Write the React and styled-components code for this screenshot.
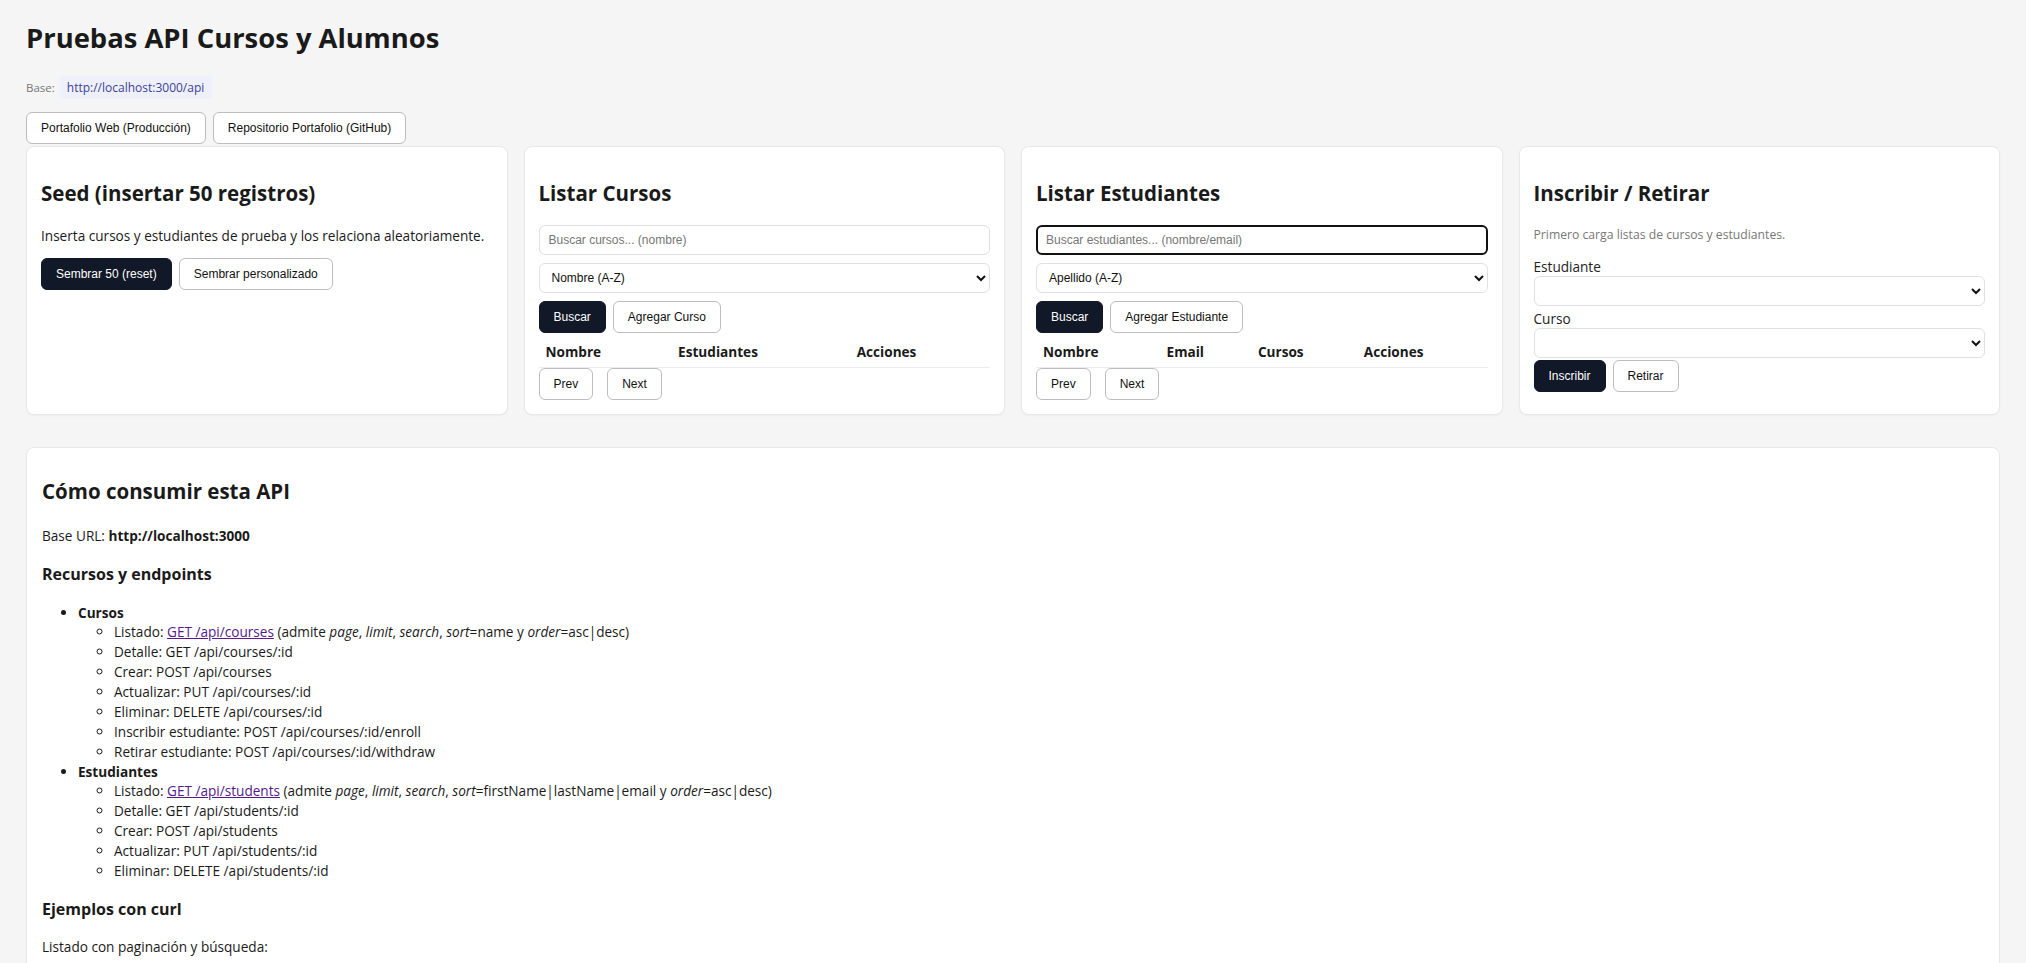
import React from "react";
import styled, { createGlobalStyle } from "styled-components";

const GlobalStyle = createGlobalStyle`
  * {
    box-sizing: border-box;
  }

  body {
    margin: 0;
    background-color: #f5f5f5;
    color: #1a1a1a;
    font-family: "Open Sans", "Noto Sans", sans-serif;
    font-size: 13.6px;
  }
`;

const Page = styled.div`
  padding: 0 26px 40px;
`;

const Title = styled.h1`
  margin: 19px 0;
  font-size: 27.4px;
  line-height: 38px;
  font-weight: 700;
`;

const BaseLine = styled.div`
  display: flex;
  align-items: center;
  gap: 4px;
  height: 23px;
  margin-top: 1px;
`;

const BaseLabel = styled.span`
  font-size: 11.5px;
  color: #777;
`;

const Code = styled.code`
  display: inline-flex;
  align-items: center;
  height: 23px;
  padding: 0 8px;
  border-radius: 4px;
  background-color: #eef0fb;
  color: #3f3f96;
  font-family: "Open Sans", sans-serif;
  font-size: 12px;
`;

const LinkRow = styled.div`
  display: flex;
  gap: 7px;
  margin-top: 13px;
`;

const Button = styled.button`
  height: 32px;
  padding: 0 14px;
  font-family: "Liberation Sans", Arial, sans-serif;
  font-size: 12px;
  color: ${(p) => (p.$primary ? "#ffffff" : "#111111")};
  background-color: ${(p) => (p.$primary ? "#111827" : "#ffffff")};
  border: 1px solid ${(p) => (p.$primary ? "#111827" : "#bdbdbd")};
  border-radius: 6px;
  cursor: pointer;
`;

const Grid = styled.div`
  display: grid;
  grid-template-columns: repeat(4, 1fr);
  gap: 16px;
  margin-top: 2px;
`;

const Card = styled.section`
  background-color: #ffffff;
  border: 1px solid #e8e8e8;
  border-radius: 8px;
  padding: 12px 14px 14px;
  box-shadow: 0 1px 2px rgba(0, 0, 0, 0.03);
`;

const CardTitle = styled.h2`
  margin: 19.5px 0 17px;
  font-size: 20.5px;
  line-height: 29px;
  font-weight: 700;
`;

const Text = styled.p`
  margin: 18.5px 0 12.5px;
  line-height: 19px;
`;

const ButtonRow = styled.div`
  display: flex;
  gap: ${(p) => p.$gap || "7px"};
`;

const Stack = styled.div`
  display: flex;
  flex-direction: column;
  gap: 8px;
`;

const Input = styled.input`
  width: 100%;
  height: 30px;
  padding: 0 ${(p) => (p.$focused ? "8px" : "9px")};
  font-family: "Liberation Sans", Arial, sans-serif;
  font-size: 12px;
  background: #ffffff;
  border: ${(p) => (p.$focused ? "2px solid #111111" : "1px solid #e0e0e0")};
  border-radius: 6px;
  outline: none;

  &::placeholder {
    color: #767676;
  }
`;

const Select = styled.select`
  width: 100%;
  height: 30px;
  padding: 0 8px;
  font-family: "Liberation Sans", Arial, sans-serif;
  font-size: 12px;
  color: #111;
  background: #ffffff;
  border: 1px solid #e0e0e0;
  border-radius: 6px;
  margin: ${(p) => p.$margin || "0"};
`;

const Table = styled.table`
  width: 100%;
  margin-top: 5px;
  border-collapse: collapse;
`;

const Th = styled.th`
  text-align: left;
  padding: 4px 7px 6px;
  font-size: 13.6px;
  line-height: 19px;
  font-weight: 700;
  border-bottom: 1px solid #ececec;
`;

const Hint = styled.p`
  margin: 18.5px 0 13px;
  font-size: 12.2px;
  line-height: 18px;
  color: #777;
`;

const FieldLabel = styled.label`
  display: block;
  line-height: 19px;
  color: #222;
`;

const DocsCard = styled.section`
  margin-top: 32.5px;
  background-color: #ffffff;
  border: 1px solid #e8e8e8;
  border-radius: 8px;
  padding: 12px 15px 20px;
`;

const DocsTitle = styled.h2`
  margin: 17px 0 19.5px;
  font-size: 20.5px;
  line-height: 29px;
  font-weight: 700;
`;

const DocsText = styled.p`
  margin: 0;
  line-height: 19px;
`;

const SubTitle = styled.h3`
  margin: ${(p) => p.$margin || "17px 0"};
  font-size: 16px;
  line-height: 22px;
  font-weight: 700;
`;

const List = styled.ul`
  margin: 0;
  padding-left: 36px;
  list-style: ${(p) => (p.$nested ? "circle" : "disc")};
`;

const Item = styled.li`
  line-height: 20px;
`;

const Lead = styled.strong`
  display: block;
  line-height: 20px;
  margin-bottom: -1px;
`;

const DocLink = styled.a`
  color: #551a8b;
  text-decoration: underline;
`;

function ListCard({ title, placeholder, focused, sort, addLabel, columns }) {
  return (
    <Card>
      <CardTitle>{title}</CardTitle>
      <Stack>
        <Input placeholder={placeholder} $focused={focused} />
        <Select defaultValue="a">
          <option value="a">{sort}</option>
        </Select>
        <ButtonRow>
          <Button $primary>Buscar</Button>
          <Button>{addLabel}</Button>
        </ButtonRow>
      </Stack>
      <Table>
        <thead>
          <tr>
            {columns.map((c) => (
              <Th key={c}>{c}</Th>
            ))}
          </tr>
        </thead>
        <tbody />
      </Table>
      <ButtonRow $gap="14px">
        <Button>Prev</Button>
        <Button>Next</Button>
      </ButtonRow>
    </Card>
  );
}

export default function App() {
  return (
    <>
      <GlobalStyle />
      <Page>
        <Title>Pruebas API Cursos y Alumnos</Title>
        <BaseLine>
          <BaseLabel>Base:</BaseLabel>
          <Code>http://localhost:3000/api</Code>
        </BaseLine>
        <LinkRow>
          <Button>Portafolio Web (Producción)</Button>
          <Button>Repositorio Portafolio (GitHub)</Button>
        </LinkRow>

        <Grid>
          <Card>
            <CardTitle>Seed (insertar 50 registros)</CardTitle>
            <Text>Inserta cursos y estudiantes de prueba y los relaciona aleatoriamente.</Text>
            <ButtonRow>
              <Button $primary>Sembrar 50 (reset)</Button>
              <Button>Sembrar personalizado</Button>
            </ButtonRow>
          </Card>

          <ListCard
            title="Listar Cursos"
            placeholder="Buscar cursos... (nombre)"
            sort="Nombre (A-Z)"
            addLabel="Agregar Curso"
            columns={["Nombre", "Estudiantes", "Acciones"]}
          />

          <ListCard
            title="Listar Estudiantes"
            placeholder="Buscar estudiantes... (nombre/email)"
            focused
            sort="Apellido (A-Z)"
            addLabel="Agregar Estudiante"
            columns={["Nombre", "Email", "Cursos", "Acciones"]}
          />

          <Card>
            <CardTitle>Inscribir / Retirar</CardTitle>
            <Hint>Primero carga listas de cursos y estudiantes.</Hint>
            <FieldLabel>Estudiante</FieldLabel>
            <Select $margin="0 0 3px">
              <option></option>
            </Select>
            <FieldLabel>Curso</FieldLabel>
            <Select $margin="0 0 2px">
              <option></option>
            </Select>
            <ButtonRow>
              <Button $primary>Inscribir</Button>
              <Button>Retirar</Button>
            </ButtonRow>
          </Card>
        </Grid>

        <DocsCard>
          <DocsTitle>Cómo consumir esta API</DocsTitle>
          <DocsText>
            Base URL: <strong>http://localhost:3000</strong>
          </DocsText>
          <SubTitle $margin="18px 0 18px">Recursos y endpoints</SubTitle>
          <List>
            <Item>
              <Lead>Cursos</Lead>
              <List $nested>
                <Item>
                  Listado: <DocLink href="#">GET /api/courses</DocLink> (admite <em>page</em>,{" "}
                  <em>limit</em>, <em>search</em>, <em>sort</em>=name y <em>order</em>=asc|desc)
                </Item>
                <Item>Detalle: GET /api/courses/:id</Item>
                <Item>Crear: POST /api/courses</Item>
                <Item>Actualizar: PUT /api/courses/:id</Item>
                <Item>Eliminar: DELETE /api/courses/:id</Item>
                <Item>Inscribir estudiante: POST /api/courses/:id/enroll</Item>
                <Item>Retirar estudiante: POST /api/courses/:id/withdraw</Item>
              </List>
            </Item>
            <Item>
              <Lead>Estudiantes</Lead>
              <List $nested>
                <Item>
                  Listado: <DocLink href="#">GET /api/students</DocLink> (admite <em>page</em>,{" "}
                  <em>limit</em>, <em>search</em>, <em>sort</em>=firstName|lastName|email y{" "}
                  <em>order</em>=asc|desc)
                </Item>
                <Item>Detalle: GET /api/students/:id</Item>
                <Item>Crear: POST /api/students</Item>
                <Item>Actualizar: PUT /api/students/:id</Item>
                <Item>Eliminar: DELETE /api/students/:id</Item>
              </List>
            </Item>
          </List>
          <SubTitle $margin="17px 0 17px">Ejemplos con curl</SubTitle>
          <DocsText>Listado con paginación y búsqueda:</DocsText>
        </DocsCard>
      </Page>
    </>
  );
}
